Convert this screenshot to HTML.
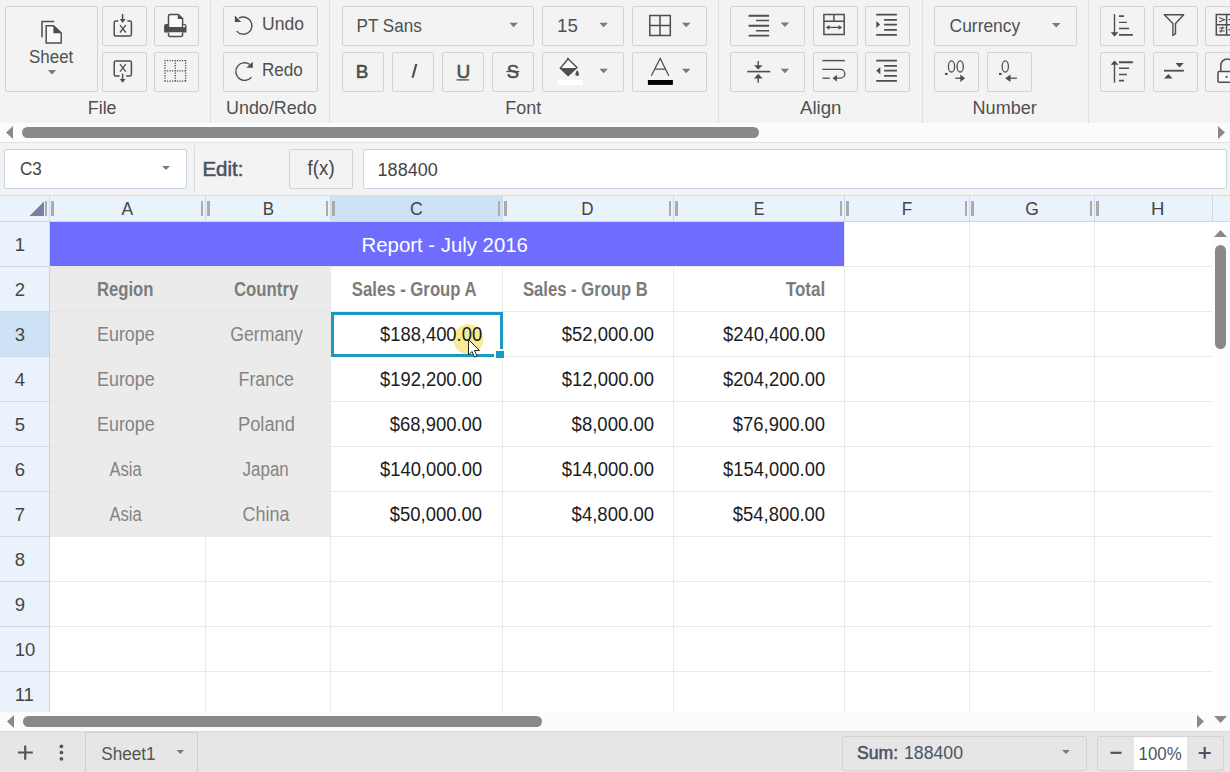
<!DOCTYPE html><html><head><meta charset="utf-8"><style>

*{box-sizing:border-box}
html,body{margin:0;padding:0}
body{width:1230px;height:772px;overflow:hidden;position:relative;background:#fff;font-family:"Liberation Sans",sans-serif}
.a{position:absolute}
.b{position:absolute;border:1px solid #d1d3d5;border-radius:2px}
svg{position:absolute;left:0;top:0;overflow:visible}
body.textonly .a, body.textonly .b, body.textonly svg.g{visibility:hidden}
body.textonly #texts text{fill:#000 !important}

</style></head><body>
<div class="a" style="left:0px;top:0px;width:1230px;height:123px;background:#f3f3f3"></div>
<div class="a" style="left:210px;top:0px;width:1px;height:123px;background:#dfdfdf"></div>
<div class="a" style="left:329px;top:0px;width:1px;height:123px;background:#dfdfdf"></div>
<div class="a" style="left:718px;top:0px;width:1px;height:123px;background:#dfdfdf"></div>
<div class="a" style="left:922px;top:0px;width:1px;height:123px;background:#dfdfdf"></div>
<div class="a" style="left:1088px;top:0px;width:1px;height:123px;background:#dfdfdf"></div>
<div class="b" style="left:5px;top:6px;width:93px;height:86px;"></div>
<div class="b" style="left:102px;top:6px;width:45px;height:40px;"></div>
<div class="b" style="left:102px;top:52px;width:45px;height:40px;"></div>
<div class="b" style="left:154px;top:6px;width:45px;height:40px;"></div>
<div class="b" style="left:154px;top:52px;width:45px;height:40px;"></div>
<div class="b" style="left:223px;top:6px;width:95px;height:40px;"></div>
<div class="b" style="left:223px;top:52px;width:95px;height:40px;"></div>
<div class="b" style="left:342px;top:6px;width:192px;height:40px;"></div>
<div class="b" style="left:542px;top:6px;width:82px;height:40px;"></div>
<div class="b" style="left:632px;top:6px;width:75px;height:40px;"></div>
<div class="b" style="left:342px;top:52px;width:42px;height:40px;"></div>
<div class="b" style="left:392px;top:52px;width:42px;height:40px;"></div>
<div class="b" style="left:442px;top:52px;width:42px;height:40px;"></div>
<div class="b" style="left:492px;top:52px;width:42px;height:40px;"></div>
<div class="b" style="left:542px;top:52px;width:82px;height:40px;"></div>
<div class="b" style="left:632px;top:52px;width:75px;height:40px;"></div>
<div class="b" style="left:730px;top:6px;width:75px;height:40px;"></div>
<div class="b" style="left:813px;top:6px;width:45px;height:40px;"></div>
<div class="b" style="left:865px;top:6px;width:45px;height:40px;"></div>
<div class="b" style="left:730px;top:52px;width:75px;height:40px;"></div>
<div class="b" style="left:813px;top:52px;width:45px;height:40px;"></div>
<div class="b" style="left:865px;top:52px;width:45px;height:40px;"></div>
<div class="b" style="left:934px;top:6px;width:143px;height:40px;"></div>
<div class="b" style="left:934px;top:52px;width:45px;height:40px;"></div>
<div class="b" style="left:987px;top:52px;width:45px;height:40px;"></div>
<div class="b" style="left:1100px;top:6px;width:45px;height:40px;"></div>
<div class="b" style="left:1100px;top:52px;width:45px;height:40px;"></div>
<div class="b" style="left:1153px;top:6px;width:45px;height:40px;"></div>
<div class="b" style="left:1153px;top:52px;width:45px;height:40px;"></div>
<div class="b" style="left:1205px;top:6px;width:45px;height:40px;"></div>
<div class="b" style="left:1205px;top:52px;width:45px;height:40px;"></div>
<div class="a" style="left:0px;top:123px;width:1230px;height:20px;background:#fcfcfc;border-bottom:1px solid #e2e2e2"></div>
<div class="a" style="left:22px;top:127px;width:737px;height:11px;background:#898989;border-radius:6px"></div>
<div class="a" style="left:0px;top:143px;width:1230px;height:52px;background:#f3f3f3"></div>
<div class="a" style="left:4px;top:149px;width:183px;height:40px;background:#fff;border:1px solid #c8d5e5;border-radius:2px"></div>
<div class="a" style="left:194px;top:145px;width:1px;height:47px;background:#dcdcdc"></div>
<div class="b" style="left:289px;top:149px;width:64px;height:40px;"></div>
<div class="a" style="left:363px;top:149px;width:864px;height:40px;background:#fff;border:1px solid #c8d5e5;border-radius:2px"></div>
<div class="a" style="left:0px;top:195px;width:1230px;height:27px;background:#eaf2fb;border-top:1px solid #d5dee8;border-bottom:1px solid #cbd9e7"></div>
<div class="a" style="left:330px;top:196px;width:173px;height:25px;background:#cde2f5"></div>
<div class="a" style="left:0px;top:222px;width:50px;height:490px;background:#eaf2fb;border-right:1px solid #cdd3d8"></div>
<div class="a" style="left:0px;top:312px;width:49px;height:44px;background:#cde2f5"></div>
<div class="a" style="left:49px;top:196px;width:1px;height:25px;background:#cbd9e7"></div>
<div class="a" style="left:205px;top:196px;width:1px;height:25px;background:#cbd9e7"></div>
<div class="a" style="left:330px;top:196px;width:1px;height:25px;background:#cbd9e7"></div>
<div class="a" style="left:502px;top:196px;width:1px;height:25px;background:#cbd9e7"></div>
<div class="a" style="left:673px;top:196px;width:1px;height:25px;background:#cbd9e7"></div>
<div class="a" style="left:844px;top:196px;width:1px;height:25px;background:#cbd9e7"></div>
<div class="a" style="left:969px;top:196px;width:1px;height:25px;background:#cbd9e7"></div>
<div class="a" style="left:1094px;top:196px;width:1px;height:25px;background:#cbd9e7"></div>
<div class="a" style="left:1212px;top:196px;width:1px;height:25px;background:#cbd9e7"></div>
<div class="a" style="left:45px;top:201px;width:2px;height:15px;background:#ababab"></div>
<div class="a" style="left:51px;top:201px;width:3px;height:15px;background:#ababab"></div>
<div class="a" style="left:201px;top:201px;width:2px;height:15px;background:#ababab"></div>
<div class="a" style="left:207px;top:201px;width:3px;height:15px;background:#ababab"></div>
<div class="a" style="left:326px;top:201px;width:2px;height:15px;background:#ababab"></div>
<div class="a" style="left:332px;top:201px;width:3px;height:15px;background:#ababab"></div>
<div class="a" style="left:498px;top:201px;width:2px;height:15px;background:#ababab"></div>
<div class="a" style="left:504px;top:201px;width:3px;height:15px;background:#ababab"></div>
<div class="a" style="left:669px;top:201px;width:2px;height:15px;background:#ababab"></div>
<div class="a" style="left:675px;top:201px;width:3px;height:15px;background:#ababab"></div>
<div class="a" style="left:840px;top:201px;width:2px;height:15px;background:#ababab"></div>
<div class="a" style="left:846px;top:201px;width:3px;height:15px;background:#ababab"></div>
<div class="a" style="left:965px;top:201px;width:2px;height:15px;background:#ababab"></div>
<div class="a" style="left:971px;top:201px;width:3px;height:15px;background:#ababab"></div>
<div class="a" style="left:1090px;top:201px;width:2px;height:15px;background:#ababab"></div>
<div class="a" style="left:1096px;top:201px;width:3px;height:15px;background:#ababab"></div>
<div class="a" style="left:0px;top:266px;width:49px;height:1px;background:#cbd9e7"></div>
<div class="a" style="left:0px;top:311px;width:49px;height:1px;background:#cbd9e7"></div>
<div class="a" style="left:0px;top:356px;width:49px;height:1px;background:#cbd9e7"></div>
<div class="a" style="left:0px;top:401px;width:49px;height:1px;background:#cbd9e7"></div>
<div class="a" style="left:0px;top:446px;width:49px;height:1px;background:#cbd9e7"></div>
<div class="a" style="left:0px;top:491px;width:49px;height:1px;background:#cbd9e7"></div>
<div class="a" style="left:0px;top:536px;width:49px;height:1px;background:#cbd9e7"></div>
<div class="a" style="left:0px;top:581px;width:49px;height:1px;background:#cbd9e7"></div>
<div class="a" style="left:0px;top:626px;width:49px;height:1px;background:#cbd9e7"></div>
<div class="a" style="left:0px;top:671px;width:49px;height:1px;background:#cbd9e7"></div>
<div class="a" style="left:205px;top:222px;width:1px;height:490px;background:#e9eaeb"></div>
<div class="a" style="left:330px;top:222px;width:1px;height:490px;background:#e9eaeb"></div>
<div class="a" style="left:502px;top:222px;width:1px;height:490px;background:#e9eaeb"></div>
<div class="a" style="left:673px;top:222px;width:1px;height:490px;background:#e9eaeb"></div>
<div class="a" style="left:844px;top:222px;width:1px;height:490px;background:#e9eaeb"></div>
<div class="a" style="left:969px;top:222px;width:1px;height:490px;background:#e9eaeb"></div>
<div class="a" style="left:1094px;top:222px;width:1px;height:490px;background:#e9eaeb"></div>
<div class="a" style="left:50px;top:266px;width:1162px;height:1px;background:#e9eaeb"></div>
<div class="a" style="left:50px;top:311px;width:1162px;height:1px;background:#e9eaeb"></div>
<div class="a" style="left:50px;top:356px;width:1162px;height:1px;background:#e9eaeb"></div>
<div class="a" style="left:50px;top:401px;width:1162px;height:1px;background:#e9eaeb"></div>
<div class="a" style="left:50px;top:446px;width:1162px;height:1px;background:#e9eaeb"></div>
<div class="a" style="left:50px;top:491px;width:1162px;height:1px;background:#e9eaeb"></div>
<div class="a" style="left:50px;top:536px;width:1162px;height:1px;background:#e9eaeb"></div>
<div class="a" style="left:50px;top:581px;width:1162px;height:1px;background:#e9eaeb"></div>
<div class="a" style="left:50px;top:626px;width:1162px;height:1px;background:#e9eaeb"></div>
<div class="a" style="left:50px;top:671px;width:1162px;height:1px;background:#e9eaeb"></div>
<div class="a" style="left:50px;top:267px;width:281px;height:270px;background:#ebebeb"></div>
<div class="a" style="left:50px;top:311px;width:281px;height:1px;background:#e6e6e6"></div>
<div class="a" style="left:50px;top:356px;width:281px;height:1px;background:#e6e6e6"></div>
<div class="a" style="left:50px;top:401px;width:281px;height:1px;background:#e6e6e6"></div>
<div class="a" style="left:50px;top:446px;width:281px;height:1px;background:#e6e6e6"></div>
<div class="a" style="left:50px;top:491px;width:281px;height:1px;background:#e6e6e6"></div>
<div class="a" style="left:50px;top:222px;width:794px;height:44px;background:#6e6dff"></div>
<div class="a" style="left:331px;top:312px;width:172px;height:45px;border:3px solid #1a9ac0"></div>
<div class="a" style="left:494px;top:349px;width:11px;height:10px;background:#fff"></div>
<div class="a" style="left:496px;top:351px;width:8px;height:7px;background:#1a9ac0"></div>
<div class="a" style="left:1212px;top:222px;width:18px;height:490px;background:#fefefe"></div>
<div class="a" style="left:1215px;top:245px;width:11px;height:104px;background:#898989;border-radius:6px"></div>
<div class="a" style="left:0px;top:712px;width:1230px;height:20px;background:#fcfcfc;border-bottom:1px solid #dedede"></div>
<div class="a" style="left:23px;top:716px;width:519px;height:11px;background:#898989;border-radius:6px"></div>
<div class="a" style="left:0px;top:732px;width:1230px;height:40px;background:#e6e6e6"></div>
<div class="a" style="left:85px;top:732px;width:113px;height:41px;border:1px solid #d0d0d0"></div>
<div class="a" style="left:842px;top:736px;width:245px;height:35px;border:1px solid #d3d3d3;border-radius:2px"></div>
<div class="a" style="left:1097px;top:736px;width:127px;height:35px;border:1px solid #d3d3d3;border-radius:2px"></div>
<div class="a" style="left:1134px;top:737px;width:53px;height:33px;background:#fff"></div>
<svg class="g" width="1230" height="772"><polygon points="47.8,70.0 56.2,70.0 52.0,74.5" fill="#7a7a7a"/><polygon points="509.4,22.8 517.9,22.8 513.6,27.2" fill="#7a7a7a"/><polygon points="599.4,22.8 607.9,22.8 603.6,27.2" fill="#7a7a7a"/><polygon points="682.0,22.8 690.5,22.8 686.2,27.2" fill="#7a7a7a"/><polygon points="599.4,68.8 607.9,68.8 603.6,73.2" fill="#7a7a7a"/><polygon points="682.0,68.8 690.5,68.8 686.2,73.2" fill="#7a7a7a"/><polygon points="780.6,22.6 789.1,22.6 784.9,27.1" fill="#7a7a7a"/><polygon points="780.6,68.8 789.1,68.8 784.9,73.2" fill="#7a7a7a"/><polygon points="1052.0,22.9 1060.5,22.9 1056.2,27.4" fill="#7a7a7a"/><polygon points="13,126 13,139 6,132.5" fill="#898989"/><polygon points="1218,126 1218,139 1225,132.5" fill="#898989"/><polygon points="162.0,166.0 170.0,166.0 166.0,170.0" fill="#7a7a7a"/><polygon points="29.5,216 44,201.5 44,216" fill="#76839a"/><polygon points="1214,237 1227,237 1220.5,230" fill="#898989"/><polygon points="1214,716 1227,716 1220.5,723" fill="#898989"/><polygon points="14,715 14,728 7,721.5" fill="#898989"/><polygon points="1197,715 1197,728 1204,721.5" fill="#898989"/><path d="M25.2,745.5 V759.8 M18,752.5 H32.8" stroke="#555" stroke-width="2.2"/><circle cx="61.4" cy="746.3" r="1.85" fill="#555"/><circle cx="61.4" cy="752.5" r="1.85" fill="#555"/><circle cx="61.4" cy="758.8" r="1.85" fill="#555"/><polygon points="176.6,750.0 184.1,750.0 180.3,754.0" fill="#7a7a7a"/><polygon points="1062.0,750.0 1070.0,750.0 1066.0,754.0" fill="#7a7a7a"/><path d="M1110.5,752.8 H1121.5" stroke="#4a5466" stroke-width="2.2"/><path d="M1204.7,747 V758.8 M1198.7,753 H1210.8" stroke="#4a5466" stroke-width="2.2"/><path d="M42,37.3 V21.6 H54.2" fill="none" stroke="#4e4e4e" stroke-width="1.5"/><path d="M46.2,25.7 H53.6 L61.2,33 V43.1 H46.2 Z" fill="#fafafa" stroke="#4e4e4e" stroke-width="1.5"/><path d="M53.4,25.2 L61.6,33.2 H53.4 Z" fill="#4e4e4e"/><path d="M118.2,21 H115.7 Q114.2,21 114.2,22.5 V34.4 Q114.2,35.9 115.7,35.9 H129.9 Q131.4,35.9 131.4,34.4 V22.5 Q131.4,21 129.9,21 H127.3" fill="none" stroke="#4e4e4e" stroke-width="1.5"/><path d="M122.6,13.9 V19.6" fill="none" stroke="#4e4e4e" stroke-width="1.5"/><polygon points="119.8,19.1 125.6,19.1 122.6,22.9" fill="#4e4e4e"/><path d="M120,25.2 L125.8,32.5 M125.8,25.2 L120,32.5" fill="none" stroke="#4e4e4e" stroke-width="1.3"/><path d="M119.6,75.9 H115.7 Q114.2,75.9 114.2,74.4 V62.5 Q114.2,61 115.7,61 H129.9 Q131.4,61 131.4,62.5 V74.4 Q131.4,75.9 129.9,75.9 H126.2" fill="none" stroke="#4e4e4e" stroke-width="1.5"/><path d="M122.6,73.8 V79.6" fill="none" stroke="#4e4e4e" stroke-width="1.5"/><polygon points="119.8,79.1 125.6,79.1 122.6,82.7" fill="#4e4e4e"/><path d="M120,64.2 L125.8,71.7 M125.8,64.2 L120,71.7" fill="none" stroke="#4e4e4e" stroke-width="1.3"/><path d="M168.5,27 V15.9 Q168.5,14.4 170,14.4 H178.2 L182.6,18.6 V27" fill="#fafafa" stroke="#4e4e4e" stroke-width="1.5"/><polygon points="177.8,14.2 182.9,18.9 177.8,18.9" fill="#4e4e4e"/><path d="M164.1,26 Q164.1,24.1 166,24.1 H168.5 V27 H182.6 V24.1 H184.6 Q186.5,24.1 186.5,26 V32.6 H164.1 Z" fill="#4e4e4e"/><rect x="183" y="25.3" width="2.2" height="1.9" fill="#f3f3f3"/><path d="M168.5,32.6 V35 Q168.5,36.4 170,36.4 H181.1 Q182.6,36.4 182.6,35 V32.6" fill="#fafafa" stroke="#4e4e4e" stroke-width="1.5"/><path d="M164.4,60.6 H186.4 M164.4,70.9 H186.4 M164.4,81.2 H186.4 M165,60 V81.8 M175.3,60 V81.8 M185.6,60 V81.8" fill="none" stroke="#4e4e4e" stroke-width="1.3" stroke-dasharray="1.25 1.25"/><path d="M236.7,31.1 A8.6,8.6 0 1 0 238.9,18.2" fill="none" stroke="#4e4e4e" stroke-width="1.4"/><polygon points="234.8,15.6 234.8,21.9 241.2,21.9" fill="#4e4e4e"/><path d="M251.5,77.1 A8.8,8.8 0 1 1 249.6,64.3" fill="none" stroke="#4e4e4e" stroke-width="1.4"/><polygon points="252.8,61.8 252.8,67.7 246.3,67.7" fill="#4e4e4e"/><path d="M649.8,15.6 H670.3 V35.5 H649.8 Z M660,15.6 V35.5 M649.8,25.5 H670.3" fill="none" stroke="#4e4e4e" stroke-width="1.5"/><path d="M568.2,58.9 L577,67.6 L568.1,75.6 L560.3,68.2 Z" fill="#fafafa" stroke="#4e4e4e" stroke-width="1.4"/><path d="M560.3,68 H577 L568.1,75.9 Z" fill="#4e4e4e"/><path d="M567.3,58 L568.6,59.3" stroke="#4e4e4e" stroke-width="1.4"/><path d="M577.2,70.1 Q579,72.6 579,74.2 A1.8,1.8 0 0 1 575.4,74.2 Q575.4,72.6 577.2,70.1 Z" fill="#4e4e4e"/><rect x="558.1" y="80" width="24.9" height="4.9" fill="#ffffff"/><path d="M651.3,75.8 L660.2,58.4 L668.8,75.8 M655.3,69.1 H665.1" fill="none" stroke="#4e4e4e" stroke-width="1.25"/><rect x="647.9" y="80" width="25" height="4.9" fill="#000"/><polygon points="411.5,77.8 413.7,77.8 417.4,64.1 415.2,64.1" fill="#4e4e4e"/><path d="M456.5,79.9 H469" stroke="#4e4e4e" stroke-width="1.3"/><path d="M506.3,71.5 H519.2" stroke="#4e4e4e" stroke-width="1.3"/><path d="M748.6,15.7 H769.1 M748.6,25.7 H769.1 M748.6,35.6 H769.1" stroke="#4e4e4e" stroke-width="1.9"/><path d="M756.1,20.6 H769.1 M756.1,30.7 H769.1" stroke="#4e4e4e" stroke-width="1.5"/><path d="M747.2,71.6 H770.3" stroke="#4e4e4e" stroke-width="1.6"/><path d="M758.2,61 V66 M758.2,78 V82.7" stroke="#4e4e4e" stroke-width="1.4"/><polygon points="754,65.2 762.6,65.2 758.2,69.6" fill="#4e4e4e"/><polygon points="758.2,73.8 754,78.5 762.6,78.5" fill="#4e4e4e"/><path d="M823.9,14.6 H844.2 V34.4 H823.9 Z M823.9,21.2 H844.2 M833.9,14.6 V21.2" fill="none" stroke="#4e4e4e" stroke-width="1.5"/><path d="M827,27.4 H841" stroke="#4e4e4e" stroke-width="1.3"/><polygon points="825.8,27.4 829.5,25 829.5,29.8" fill="#4e4e4e"/><polygon points="842.2,27.4 838.5,25 838.5,29.8" fill="#4e4e4e"/><path d="M822.4,60.6 H844.9" stroke="#4e4e4e" stroke-width="1.4"/><path d="M822.4,69.4 H840.4 A4.4,4.4 0 0 1 840.4,78.2 H836" fill="none" stroke="#4e4e4e" stroke-width="1.3"/><path d="M822.4,78.2 H829.9" stroke="#4e4e4e" stroke-width="1.3"/><polygon points="832.6,78.2 836.9,74.8 836.9,81.8" fill="#4e4e4e"/><path d="M876.2,14.7 H896.9 M876.2,34.9 H896.9" stroke="#4e4e4e" stroke-width="1.8"/><path d="M884.1,19.8 H896.9 M884.1,24.7 H896.9 M884.1,29.8 H896.9" stroke="#4e4e4e" stroke-width="1.8"/><polygon points="876.3,21 876.3,28 880.2,24.5" fill="#4e4e4e"/><path d="M876.2,60.7 H896.9 M876.2,80.9 H896.9" stroke="#4e4e4e" stroke-width="1.8"/><path d="M884.1,65.8 H896.9 M884.1,70.7 H896.9 M884.1,75.8 H896.9" stroke="#4e4e4e" stroke-width="1.8"/><polygon points="880.3,67 880.3,74.3 876.2,70.7" fill="#4e4e4e"/><rect x="945" y="72.9" width="2.6" height="2.1" fill="#4e4e4e"/><ellipse cx="951.5" cy="66.4" rx="3.1" ry="5.6" fill="none" stroke="#4e4e4e" stroke-width="1.3"/><ellipse cx="960.2" cy="66.4" rx="3.1" ry="5.6" fill="none" stroke="#4e4e4e" stroke-width="1.3"/><path d="M955.2,78.2 H961" stroke="#4e4e4e" stroke-width="1.3"/><polygon points="960.3,74.5 960.3,82 965.1,78.2" fill="#4e4e4e"/><rect x="999" y="72.9" width="2.6" height="2.1" fill="#4e4e4e"/><ellipse cx="1005.3" cy="66.4" rx="3.1" ry="5.6" fill="none" stroke="#4e4e4e" stroke-width="1.3"/><path d="M1010,78.2 H1016.9" stroke="#4e4e4e" stroke-width="1.3"/><polygon points="1005.2,78.2 1010.5,74.5 1010.5,82" fill="#4e4e4e"/><path d="M1114.5,14.2 V33" stroke="#4e4e4e" stroke-width="1.4"/><polygon points="1110.6,32.2 1118.5,32.2 1114.5,36.4" fill="#4e4e4e"/><path d="M1119,16.1 H1124 M1119,34.9 H1132.9" stroke="#4e4e4e" stroke-width="1.9"/><path d="M1119,22.4 H1126.9 M1119,28.5 H1129.1" stroke="#4e4e4e" stroke-width="1.4"/><path d="M1114.5,63 V82.7" stroke="#4e4e4e" stroke-width="1.4"/><polygon points="1110.6,64.8 1118.5,64.8 1114.5,60.5" fill="#4e4e4e"/><path d="M1119,62.2 H1132.9 M1119,80.6 H1124" stroke="#4e4e4e" stroke-width="1.9"/><path d="M1119,68.3 H1129.1 M1119,74.5 H1126.9" stroke="#4e4e4e" stroke-width="1.4"/><path d="M1164.3,14.7 H1183.7 L1175.5,23.4 V33.6 L1172.9,35.5 V23.4 Z" fill="none" stroke="#4e4e4e" stroke-width="1.4" stroke-linejoin="round"/><path d="M1164,70.7 H1183.9" stroke="#4e4e4e" stroke-width="1.8"/><polygon points="1175.5,63 1183.7,63 1179.5,67.4" fill="#4e4e4e"/><polygon points="1164,78.4 1172.6,78.4 1168.4,74" fill="#4e4e4e"/><path d="M1216.3,14.5 H1240 V34.9 H1216.3 Z M1226.6,14.5 V34.9 M1216.3,24.8 H1240" fill="none" stroke="#4e4e4e" stroke-width="1.5"/><path d="M1219,17.5 L1224.5,19.7 L1219,21.9 M1219,28 H1224.5 M1219,31 H1224.5 M1223,26.5 L1220.5,32.5" fill="none" stroke="#4e4e4e" stroke-width="1.1"/><path d="M1228.5,19.7 H1232 M1228.5,29.7 H1230" stroke="#4e4e4e" stroke-width="1.3"/><path d="M1220.8,71.6 V65.5 A6.5,6.5 0 0 1 1233.8,65.5 V71.6" fill="none" stroke="#4e4e4e" stroke-width="1.5"/><rect x="1218" y="71.6" width="20" height="10.7" rx="1" fill="#fafafa" stroke="#4e4e4e" stroke-width="1.5"/><circle cx="1226.6" cy="76.9" r="1.1" fill="#4e4e4e"/><circle cx="468.3" cy="339.2" r="15" fill="#f6ea8a" fill-opacity="0.9"/></svg>
<svg id="texts" width="1230" height="772" font-family="Liberation Sans"><text x="29.00" y="62.60" font-size="18" textLength="44.26" lengthAdjust="spacingAndGlyphs" fill="#505050">Sheet</text>
<text x="87.80" y="113.60" font-size="18" textLength="28.75" lengthAdjust="spacingAndGlyphs" fill="#505050">File</text>
<text x="262.00" y="29.50" font-size="18" textLength="41.99" lengthAdjust="spacingAndGlyphs" fill="#505050">Undo</text>
<text x="262.00" y="76.10" font-size="18" textLength="40.87" lengthAdjust="spacingAndGlyphs" fill="#505050">Redo</text>
<text x="226.00" y="114.00" font-size="18" textLength="90.64" lengthAdjust="spacingAndGlyphs" fill="#505050">Undo/Redo</text>
<text x="356.60" y="31.70" font-size="18" textLength="65.16" lengthAdjust="spacingAndGlyphs" fill="#505050">PT Sans</text>
<text x="557.00" y="31.80" font-size="18" textLength="20.81" lengthAdjust="spacingAndGlyphs" fill="#505050">15</text>
<text x="355.70" y="77.80" font-size="18" textLength="12.61" lengthAdjust="spacingAndGlyphs" fill="#4e4e4e" stroke="#4e4e4e" stroke-width="0.55">B</text>
<text x="456.40" y="77.80" font-size="18" textLength="13.77" lengthAdjust="spacingAndGlyphs" fill="#4e4e4e" stroke="#4e4e4e" stroke-width="0.55">U</text>
<text x="506.70" y="77.80" font-size="18" textLength="12.30" lengthAdjust="spacingAndGlyphs" fill="#4e4e4e" stroke="#4e4e4e" stroke-width="0.55">S</text>
<text x="505.20" y="113.50" font-size="18" textLength="35.97" lengthAdjust="spacingAndGlyphs" fill="#505050">Font</text>
<text x="800.00" y="114.00" font-size="18" textLength="41.48" lengthAdjust="spacingAndGlyphs" fill="#505050">Align</text>
<text x="949.60" y="31.90" font-size="18" textLength="70.63" lengthAdjust="spacingAndGlyphs" fill="#505050">Currency</text>
<text x="972.60" y="114.00" font-size="18" textLength="64.11" lengthAdjust="spacingAndGlyphs" fill="#505050">Number</text>
<text x="20.00" y="174.70" font-size="18" textLength="21.87" lengthAdjust="spacingAndGlyphs" fill="#454545">C3</text>
<text x="202.40" y="176.00" font-size="19.5" textLength="40.93" lengthAdjust="spacingAndGlyphs" fill="#4d5362" stroke="#4d5362" stroke-width="0.55">Edit:</text>
<text x="307.60" y="175.40" font-size="19.5" textLength="27.04" lengthAdjust="spacingAndGlyphs" fill="#454545">f(x)</text>
<text x="377.60" y="175.60" font-size="18" textLength="60.16" lengthAdjust="spacingAndGlyphs" fill="#454545">188400</text>
<text x="121.60" y="214.60" font-size="18.5" textLength="11.63" lengthAdjust="spacingAndGlyphs" fill="#454545">A</text>
<text x="262.80" y="214.60" font-size="18.5" textLength="11.31" lengthAdjust="spacingAndGlyphs" fill="#454545">B</text>
<text x="410.00" y="214.60" font-size="18.5" textLength="12.75" lengthAdjust="spacingAndGlyphs" fill="#454545">C</text>
<text x="581.20" y="214.60" font-size="18.5" textLength="12.30" lengthAdjust="spacingAndGlyphs" fill="#454545">D</text>
<text x="753.80" y="214.60" font-size="18.5" textLength="10.71" lengthAdjust="spacingAndGlyphs" fill="#454545">E</text>
<text x="901.80" y="214.60" font-size="18.5" textLength="10.45" lengthAdjust="spacingAndGlyphs" fill="#454545">F</text>
<text x="1025.20" y="214.60" font-size="18.5" textLength="13.56" lengthAdjust="spacingAndGlyphs" fill="#454545">G</text>
<text x="1151.00" y="214.60" font-size="18.5" textLength="13.44" lengthAdjust="spacingAndGlyphs" fill="#454545">H</text>
<text x="14.70" y="251.00" font-size="18.5" fill="#454545">1</text>
<text x="14.70" y="296.00" font-size="18.5" fill="#454545">2</text>
<text x="14.70" y="341.00" font-size="18.5" fill="#454545">3</text>
<text x="14.70" y="386.00" font-size="18.5" fill="#454545">4</text>
<text x="14.70" y="431.00" font-size="18.5" fill="#454545">5</text>
<text x="14.70" y="476.00" font-size="18.5" fill="#454545">6</text>
<text x="14.70" y="521.00" font-size="18.5" fill="#454545">7</text>
<text x="14.70" y="566.00" font-size="18.5" fill="#454545">8</text>
<text x="14.70" y="611.00" font-size="18.5" fill="#454545">9</text>
<text x="14.70" y="656.00" font-size="18.5" fill="#454545">10</text>
<text x="14.70" y="701.00" font-size="18.5" fill="#454545">11</text>
<text x="361.60" y="251.50" font-size="20" textLength="166.26" lengthAdjust="spacingAndGlyphs" fill="#ffffff">Report - July 2016</text>
<text x="97.00" y="296.00" font-size="20" textLength="56.49" lengthAdjust="spacingAndGlyphs" fill="#7c7c7c" font-weight="bold">Region</text>
<text x="234.00" y="296.00" font-size="20" textLength="64.24" lengthAdjust="spacingAndGlyphs" fill="#7c7c7c" font-weight="bold">Country</text>
<text x="351.80" y="296.00" font-size="20" textLength="124.84" lengthAdjust="spacingAndGlyphs" fill="#7c7c7c" font-weight="bold">Sales - Group A</text>
<text x="523.00" y="296.00" font-size="20" textLength="124.84" lengthAdjust="spacingAndGlyphs" fill="#7c7c7c" font-weight="bold">Sales - Group B</text>
<text x="785.80" y="296.00" font-size="20" textLength="39.34" lengthAdjust="spacingAndGlyphs" fill="#7c7c7c" font-weight="bold">Total</text>
<text x="97.00" y="340.60" font-size="20" textLength="57.69" lengthAdjust="spacingAndGlyphs" fill="#848484">Europe</text>
<text x="230.20" y="340.60" font-size="20" textLength="72.69" lengthAdjust="spacingAndGlyphs" fill="#848484">Germany</text>
<text x="380.00" y="340.60" font-size="20" textLength="102.10" lengthAdjust="spacingAndGlyphs" fill="#1c1c1c">$188,400.00</text>
<text x="561.80" y="340.60" font-size="20" textLength="92.23" lengthAdjust="spacingAndGlyphs" fill="#1c1c1c">$52,000.00</text>
<text x="723.00" y="340.60" font-size="20" textLength="102.10" lengthAdjust="spacingAndGlyphs" fill="#1c1c1c">$240,400.00</text>
<text x="97.00" y="385.60" font-size="20" textLength="57.69" lengthAdjust="spacingAndGlyphs" fill="#848484">Europe</text>
<text x="238.60" y="385.60" font-size="20" textLength="55.30" lengthAdjust="spacingAndGlyphs" fill="#848484">France</text>
<text x="380.00" y="385.60" font-size="20" textLength="102.10" lengthAdjust="spacingAndGlyphs" fill="#1c1c1c">$192,200.00</text>
<text x="561.80" y="385.60" font-size="20" textLength="92.23" lengthAdjust="spacingAndGlyphs" fill="#1c1c1c">$12,000.00</text>
<text x="723.00" y="385.60" font-size="20" textLength="102.10" lengthAdjust="spacingAndGlyphs" fill="#1c1c1c">$204,200.00</text>
<text x="97.00" y="430.60" font-size="20" textLength="57.69" lengthAdjust="spacingAndGlyphs" fill="#848484">Europe</text>
<text x="238.00" y="430.60" font-size="20" textLength="56.90" lengthAdjust="spacingAndGlyphs" fill="#848484">Poland</text>
<text x="389.80" y="430.60" font-size="20" textLength="92.27" lengthAdjust="spacingAndGlyphs" fill="#1c1c1c">$68,900.00</text>
<text x="571.60" y="430.60" font-size="20" textLength="82.49" lengthAdjust="spacingAndGlyphs" fill="#1c1c1c">$8,000.00</text>
<text x="732.80" y="430.60" font-size="20" textLength="92.27" lengthAdjust="spacingAndGlyphs" fill="#1c1c1c">$76,900.00</text>
<text x="109.40" y="475.60" font-size="20" textLength="32.31" lengthAdjust="spacingAndGlyphs" fill="#848484">Asia</text>
<text x="242.60" y="475.60" font-size="20" textLength="46.11" lengthAdjust="spacingAndGlyphs" fill="#848484">Japan</text>
<text x="380.00" y="475.60" font-size="20" textLength="102.10" lengthAdjust="spacingAndGlyphs" fill="#1c1c1c">$140,000.00</text>
<text x="561.80" y="475.60" font-size="20" textLength="92.23" lengthAdjust="spacingAndGlyphs" fill="#1c1c1c">$14,000.00</text>
<text x="723.00" y="475.60" font-size="20" textLength="102.10" lengthAdjust="spacingAndGlyphs" fill="#1c1c1c">$154,000.00</text>
<text x="109.40" y="520.60" font-size="20" textLength="32.31" lengthAdjust="spacingAndGlyphs" fill="#848484">Asia</text>
<text x="242.60" y="520.60" font-size="20" textLength="46.90" lengthAdjust="spacingAndGlyphs" fill="#848484">China</text>
<text x="389.80" y="520.60" font-size="20" textLength="92.27" lengthAdjust="spacingAndGlyphs" fill="#1c1c1c">$50,000.00</text>
<text x="571.60" y="520.60" font-size="20" textLength="82.49" lengthAdjust="spacingAndGlyphs" fill="#1c1c1c">$4,800.00</text>
<text x="732.80" y="520.60" font-size="20" textLength="92.27" lengthAdjust="spacingAndGlyphs" fill="#1c1c1c">$54,800.00</text>
<text x="101.20" y="759.80" font-size="18" textLength="54.46" lengthAdjust="spacingAndGlyphs" fill="#555555">Sheet1</text>
<text x="857.00" y="759.00" font-size="18" textLength="41.14" lengthAdjust="spacingAndGlyphs" fill="#4a5466" stroke="#4a5466" stroke-width="0.55">Sum:</text>
<text x="904.00" y="759.00" font-size="18" textLength="59.04" lengthAdjust="spacingAndGlyphs" fill="#4a5466">188400</text>
<text x="1138.60" y="759.90" font-size="18" textLength="43.01" lengthAdjust="spacingAndGlyphs" fill="#4a5466">100%</text></svg>
<svg class="g" width="1230" height="772"><path d="M468.5,339.5 L468.5,355 L472,351.5 L474.5,357 L477,356 L474.5,350.5 L479.5,350.5 Z" fill="#fff" stroke="#222" stroke-width="1"/></svg>
</body></html>
